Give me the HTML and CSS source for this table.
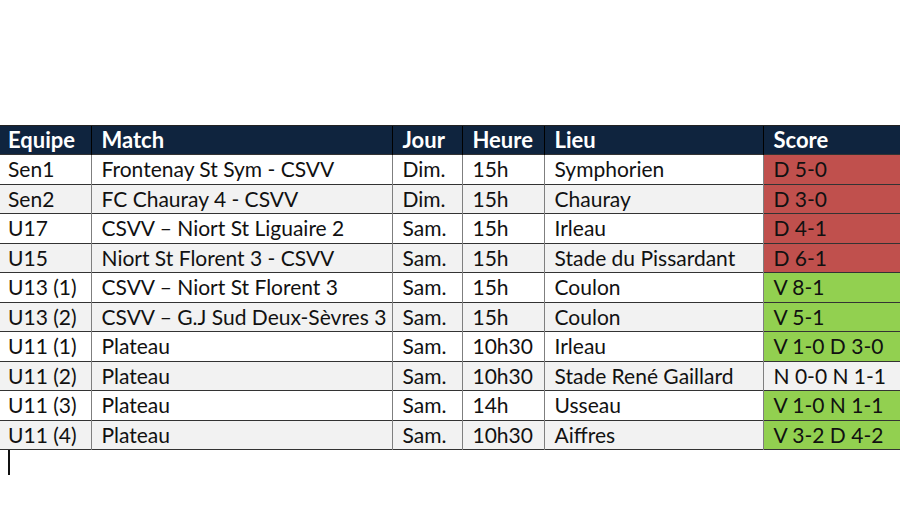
FILE: index.html
```html
<!DOCTYPE html>
<html lang="fr">
<head>
<meta charset="utf-8">
<link rel="stylesheet" href="styles.css">
</head>
<body>
<div class="page">
<table class="matches">
  <colgroup>
    <col class="c-eq"><col class="c-match"><col class="c-jour"><col class="c-heure"><col class="c-lieu"><col class="c-score">
  </colgroup>
  <thead>
    <tr><th class="first">Equipe</th><th>Match</th><th>Jour</th><th>Heure</th><th>Lieu</th><th>Score</th></tr>
  </thead>
  <tbody>
    <tr><td class="first">Sen1</td><td>Frontenay St Sym - CSVV</td><td>Dim.</td><td>15h</td><td>Symphorien</td><td class="loss">D 5-0</td></tr>
    <tr><td class="first">Sen2</td><td>FC Chauray 4 - CSVV</td><td>Dim.</td><td>15h</td><td>Chauray</td><td class="loss">D 3-0</td></tr>
    <tr><td class="first">U17</td><td>CSVV – Niort St Liguaire 2</td><td>Sam.</td><td>15h</td><td>Irleau</td><td class="loss">D 4-1</td></tr>
    <tr><td class="first">U15</td><td>Niort St Florent 3 - CSVV</td><td>Sam.</td><td>15h</td><td>Stade du Pissardant</td><td class="loss">D 6-1</td></tr>
    <tr><td class="first">U13 (1)</td><td>CSVV – Niort St Florent 3</td><td>Sam.</td><td>15h</td><td>Coulon</td><td class="win">V 8-1</td></tr>
    <tr><td class="first">U13 (2)</td><td>CSVV – G.J Sud Deux-Sèvres 3</td><td>Sam.</td><td>15h</td><td>Coulon</td><td class="win">V 5-1</td></tr>
    <tr><td class="first">U11 (1)</td><td>Plateau</td><td>Sam.</td><td>10h30</td><td>Irleau</td><td class="win">V 1-0 D 3-0</td></tr>
    <tr><td class="first">U11 (2)</td><td>Plateau</td><td>Sam.</td><td>10h30</td><td>Stade René Gaillard</td><td>N 0-0 N 1-1</td></tr>
    <tr><td class="first">U11 (3)</td><td>Plateau</td><td>Sam.</td><td>14h</td><td>Usseau</td><td class="win">V 1-0 N 1-1</td></tr>
    <tr><td class="first">U11 (4)</td><td>Plateau</td><td>Sam.</td><td>10h30</td><td>Aiffres</td><td class="win">V 3-2 D 4-2</td></tr>
  </tbody>
</table>
<div class="caret"></div>
</div>
</body>
</html>
```
FILE: styles.css
```css
html, body {
  margin: 0;
  padding: 0;
  background: #ffffff;
  overflow: hidden;
}
.page {
  width: 900px;
  height: 505px;
  padding-top: 125px;
  box-sizing: border-box;
  overflow: hidden;
  font-family: Lato, "Liberation Sans", sans-serif;
}
.matches {
  border-collapse: collapse;
  table-layout: fixed;
  width: 960px;
  font-size: 21px;
  color: #111111;
}
.c-eq { width: 91px; }
.c-match { width: 301px; }
.c-jour { width: 70px; }
.c-heure { width: 82px; }
.c-lieu { width: 219px; }
.c-score { width: 197px; }
th, td {
  text-align: left;
  padding: 0 0 0 10px;
  white-space: nowrap;
  overflow: hidden;
  border-left: 1px solid #7f7f7f;
  line-height: 24px;
}
th.first, td.first {
  border-left: none;
  padding-left: 8px;
}
thead tr {
  height: 29px;
  background: #0f243e;
}
th {
  color: #ffffff;
  font-weight: bold;
  font-size: 22px;
  border-left: 1px solid #000000;
  border-top: 1px solid #222222;
}
tbody tr {
  height: 29.5px;
  border-top: 1px solid #333333;
}
tbody tr:nth-child(even) {
  background: #f2f2f2;
}
tbody tr:last-child {
  border-bottom: 1px solid #333333;
}
td.loss { background: #c0504d; }
td.win { background: #92d050; }
.caret {
  width: 2px;
  height: 25px;
  margin-left: 8px;
  background: #111111;
}
```
